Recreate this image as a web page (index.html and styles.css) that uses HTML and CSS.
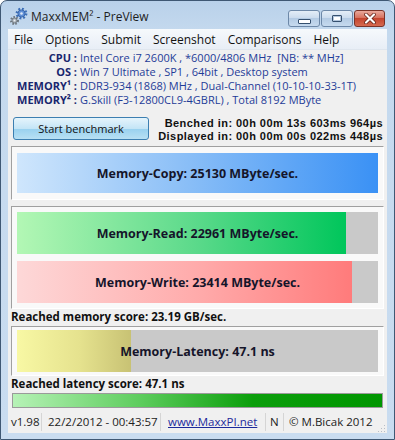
FILE: index.html
```html
<!DOCTYPE html>
<html lang="en">
<head>
    <meta charset="UTF-8">
    <title>MaxxMEM² - PreView</title>
    <link rel="stylesheet" href="styles.css">
</head>
<body>

    <div class="window">
        <!-- Title bar -->
        <div class="titlebar">
            <svg class="app-icon" width="20" height="20" viewBox="0 0 20 20">
                <circle cx="12.5" cy="7.5" r="4.6" fill="none" stroke="#3d6fb8" stroke-width="2.6" stroke-dasharray="1.8 1.8"/>
                <circle cx="12.5" cy="7.5" r="3.6" fill="#5f8fd6" stroke="#2c5aa0" stroke-width="0.8"/>
                <circle cx="12.5" cy="7.5" r="1.3" fill="#dfe9f6"/>
                <circle cx="5.5" cy="14.5" r="3.4" fill="none" stroke="#707880" stroke-width="2.2" stroke-dasharray="1.5 1.4"/>
                <circle cx="5.5" cy="14.5" r="2.6" fill="#a8b0b8" stroke="#5c646c" stroke-width="0.7"/>
                <circle cx="5.5" cy="14.5" r="1" fill="#eef1f4"/>
            </svg>
            <span class="title-text">MaxxMEM² - PreView</span>
            <div class="caption-buttons">
                <div class="cap-btn"><span class="glyph-min"></span></div>
                <div class="cap-btn"><span class="glyph-max"></span></div>
                <div class="cap-btn close">
                    <svg width="14" height="11" viewBox="0 0 14 11">
                        <path d="M3 1.5 L11 9.5 M11 1.5 L3 9.5" stroke="#5a1a10" stroke-width="3.6" stroke-linecap="round"/>
                        <path d="M3 1.5 L11 9.5 M11 1.5 L3 9.5" stroke="#ffffff" stroke-width="2.2" stroke-linecap="round"/>
                    </svg>
                </div>
            </div>
        </div>

        <div class="client">
            <!-- Menu -->
            <div class="menubar">
                <span>File</span>
                <span>Options</span>
                <span>Submit</span>
                <span>Screenshot</span>
                <span>Comparisons</span>
                <span>Help</span>
            </div>

            <div class="content">
                <!-- System info -->
                <div class="info">
                    <div class="info-row"><span class="label">CPU :</span><span class="value">Intel Core i7 2600K , *6000/4806 MHz &nbsp;[NB: ** MHz]</span></div>
                    <div class="info-row"><span class="label">OS :</span><span class="value">Win 7 Ultimate , SP1 , 64bit , Desktop system</span></div>
                    <div class="info-row"><span class="label">MEMORY¹ :</span><span class="value">DDR3-934 (1868) MHz , Dual-Channel (10-10-10-33-1T)</span></div>
                    <div class="info-row"><span class="label">MEMORY² :</span><span class="value">G.Skill (F3-12800CL9-4GBRL) , Total 8192 MByte</span></div>
                </div>

                <div class="bench-row">
                    <button class="start-btn">Start benchmark</button>
                    <div class="timings">
                        <div>Benched in: 00h 00m 13s 603ms 964µs</div>
                        <div>Displayed in: 00h 00m 00s 022ms 448µs</div>
                    </div>
                </div>

                <div class="panel">
                    <div class="bar">
                        <div class="fill copy" style="width: 100%"></div>
                        <span class="bar-label">Memory-Copy: 25130 MByte/sec.</span>
                    </div>
                </div>

                <div class="panel rw">
                    <div class="bar">
                        <div class="fill read" style="width: 91.1%"></div>
                        <span class="bar-label">Memory-Read: 22961 MByte/sec.</span>
                    </div>
                    <div class="bar">
                        <div class="fill write" style="width: 92.8%"></div>
                        <span class="bar-label">Memory-Write: 23414 MByte/sec.</span>
                    </div>
                </div>

                <div class="score">Reached memory score: 23.19 GB/sec.</div>

                <div class="panel latency">
                    <div class="bar">
                        <div class="fill lat" style="width: 31.6%"></div>
                        <span class="bar-label">Memory-Latency: 47.1 ns</span>
                    </div>
                </div>

                <div class="score">Reached latency score: 47.1 ns</div>

                <div class="progress"><div class="progress-fill"></div></div>
            </div>

            <!-- Status bar -->
            <div class="statusbar">
                <span class="st st-ver">v1.98</span>
                <span class="st st-date">22/2/2012 - 00:43:57</span>
                <span class="st st-link"><a href="#">www.MaxxPI.net</a></span>
                <span class="st st-n">N</span>
                <span class="st st-copy">© M.Bicak 2012</span>
                <span class="grip">
                    <svg width="9" height="9" viewBox="0 0 9 9">
                        <rect x="7" y="1" width="1" height="1" fill="#b8bec6"/>
                        <rect x="4" y="4" width="1" height="1" fill="#b8bec6"/>
                        <rect x="7" y="4" width="1" height="1" fill="#b8bec6"/>
                        <rect x="1" y="7" width="1" height="1" fill="#b8bec6"/>
                        <rect x="4" y="7" width="1" height="1" fill="#b8bec6"/>
                        <rect x="7" y="7" width="1" height="1" fill="#b8bec6"/>
                    </svg>
                </span>
            </div>
        </div>
    </div>

</body>
</html>
```

FILE: styles.css
```css
body {
    margin: 0;
    padding: 0;
    font-family: 'Open Sans', 'Liberation Sans', sans-serif;
    background-color: #ffffff;
}

.window {
    width: 395px;
    height: 440px;
    box-sizing: border-box;
    border: 1px solid #3f5874;
    border-radius: 7px 7px 0 0;
    background: linear-gradient(to bottom, #b9d1ea 0px, #c4d9ee 30px, #c9dcf0 100%);
    padding: 0 7px 6px 7px;
    display: flex;
    flex-direction: column;
    overflow: hidden;
}

/* title bar */
.titlebar {
    height: 29px;
    display: flex;
    align-items: center;
}

.app-icon {
    margin-left: 1px;
    margin-top: 1px;
}

.title-text {
    font-size: 12px;
    color: #1e1e1e;
    margin-left: 2px;
    margin-top: 2px;
}

.caption-buttons {
    margin-left: auto;
    margin-right: 2px;
    margin-top: 7px;
    display: flex;
    gap: 1px;
}

.cap-btn {
    width: 32px;
    height: 17px;
    box-sizing: border-box;
    border: 1px solid #6d88a8;
    border-radius: 3px;
    background: linear-gradient(to bottom, #e4edf7 0%, #ccdcee 45%, #b4cbe4 50%, #c6daee 100%);
    display: flex;
    align-items: center;
    justify-content: center;
}

.cap-btn.close {
    width: 31px;
    border-color: #7a3328;
    background: linear-gradient(to bottom, #e9a99c 0%, #d7725f 45%, #c4452f 50%, #d66a50 100%);
}

.glyph-min {
    width: 11px;
    height: 3px;
    margin-top: 5px;
    border: 1px solid #35506f;
    border-radius: 1px;
    background: #ffffff;
}

.glyph-max {
    width: 8px;
    height: 5px;
    border: 1px solid #35506f;
    border-radius: 1px;
    background: #ffffff;
    box-shadow: inset 0 0 0 1px #b3c6dc;
}

/* client */
.client {
    flex: 1;
    background-color: #f0f0f0;
    display: flex;
    flex-direction: column;
}

.menubar {
    height: 20px;
    display: flex;
    align-items: center;
    gap: 12px;
    padding-left: 6px;
    font-size: 12px;
    color: #111;
    background: linear-gradient(to bottom, #f6f9fc, #e8eef6);
    border-bottom: 1px solid #dfe6ee;
}

.content {
    padding: 0 3px;
    flex: 1;
}

.info {
    padding-top: 1px;
    font-size: 11px;
}

.info-row {
    display: flex;
    height: 14px;
    line-height: 14px;
}

.info-row .label {
    width: 66px;
    text-align: right;
    font-weight: bold;
    color: #18266e;
}

.info-row .value {
    margin-left: 3px;
    color: #1f3c98;
}

.bench-row {
    display: flex;
    justify-content: space-between;
    margin-top: 9px;
    height: 27px;
}

.start-btn {
    width: 136px;
    height: 23px;
    margin: 1px 0 0 2px;
    border: 1px solid #3c7fb1;
    border-radius: 3px;
    background: linear-gradient(to bottom, #e5f4fc 0%, #c4e5f6 50%, #98d1ef 51%, #b8e0f4 100%);
    font-family: 'Open Sans', 'Liberation Sans', sans-serif;
    font-size: 11px;
    color: #111;
    padding: 0;
}

.timings {
    text-align: right;
    font-family: 'Liberation Sans', sans-serif;
    font-weight: bold;
    font-size: 11px;
    letter-spacing: 0.45px;
    line-height: 13px;
    color: #111;
    padding-top: 1px;
    margin-right: 1px;
    white-space: nowrap;
}

.panel {
    margin-top: 3px;
    border: 1px solid #ffffff;
    border-top-color: #a0a0a0;
    border-left-color: #a0a0a0;
    background-color: #f9f9f9;
    padding: 6px 5px 6px 5px;
}

.panel.rw {
    margin-top: 6px;
    padding: 5px 5px;
    display: flex;
    flex-direction: column;
    gap: 7px;
}

.panel.latency {
    margin-top: 1px;
    padding: 3px 5px;
}

.bar {
    position: relative;
    height: 40px;
    background-color: #c9c9c9;
    display: flex;
    align-items: center;
    justify-content: center;
}

.rw .bar,
.latency .bar {
    height: 42px;
}

.fill {
    position: absolute;
    left: 0;
    top: 0;
    bottom: 0;
}

.fill.copy {
    background: linear-gradient(to right, #cfe6fc, #8dc0f7 45%, #3a91f5);
}

.fill.read {
    background: linear-gradient(to right, #b3f7b5, #5ad98a 55%, #00c65b);
}

.fill.write {
    background: linear-gradient(to right, #fdd8d8, #ffaaaa 55%, #ff7b7b);
}

.fill.lat {
    background: linear-gradient(to right, #f8f8a4, #e5e28e 55%, #c8c274);
}

.bar-label {
    position: relative;
    font-weight: bold;
    font-size: 12.5px;
    color: #15152a;
}

.score {
    height: 16px;
    line-height: 16px;
    font-weight: bold;
    font-size: 11.5px;
    color: #111;
}

.progress {
    margin: 1px 1px 0 1px;
    height: 15px;
    box-sizing: border-box;
    border: 1px solid #9a9a9a;
    background: #e6e6e6;
}

.progress-fill {
    height: 100%;
    background: linear-gradient(to right, #b6f2b6, #5ccc5c 35%, #0b9e0b 65%, #009600);
}

/* status bar */
.statusbar {
    margin-top: 3px;
    height: 22px;
    display: flex;
    align-items: center;
    font-size: 11.5px;
    color: #222;
    white-space: nowrap;
}

.st {
    height: 18px;
    line-height: 18px;
    box-sizing: border-box;
    border-left: 1px solid #d5d5d5;
    overflow: hidden;
}

.st-ver {
    border-left: none;
    width: 33px;
    padding-left: 3px;
}

.st-date {
    width: 119px;
    padding-left: 6px;
}

.st-link {
    width: 105px;
    padding-left: 7px;
}

.st-link a {
    color: #1c2a9c;
}

.st-n {
    width: 18px;
    padding-left: 4px;
}

.st-copy {
    width: 90px;
    padding-left: 5px;
}

.grip {
    margin-left: auto;
    margin-right: 1px;
    align-self: flex-end;
    height: 12px;
}
```
